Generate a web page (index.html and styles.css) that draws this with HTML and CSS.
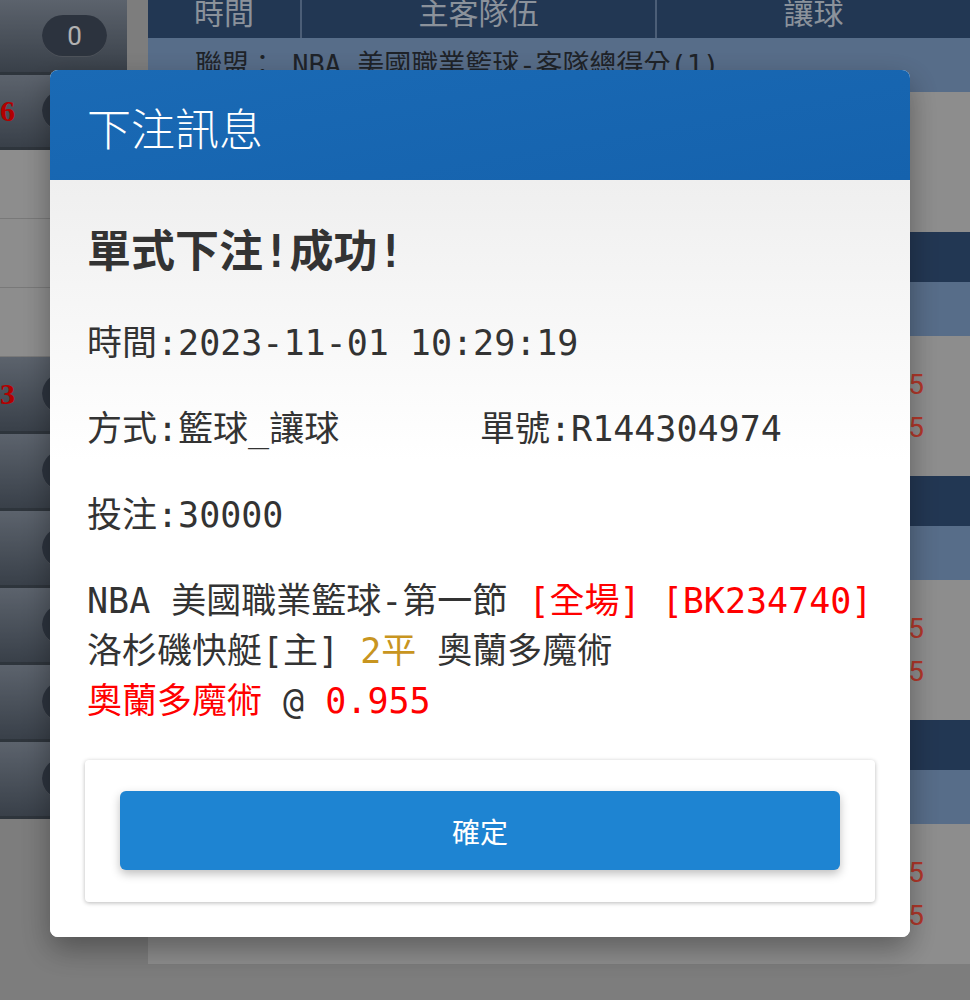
FILE: index.html
```html
<!DOCTYPE html>
<html lang="zh-Hant">
<head>
    <meta charset="UTF-8">
    <meta name="viewport" content="width=device-width, initial-scale=1.0">
    <title>下注訊息</title>
    <link rel="stylesheet" href="styles.css">
</head>
<body>
    <div class="page">
        <aside class="side">
            <div class="side-row"><span class="score"></span><span class="pill">0</span></div>
            <div class="side-row"><span class="score">6</span><span class="pill"></span></div>
            <div class="side-row plain"></div>
            <div class="side-row plain"></div>
            <div class="side-row plain"></div>
            <div class="side-row game"><span class="score">3</span><span class="pill"></span></div>
            <div class="side-row game"><span class="score"></span><span class="pill"></span></div>
            <div class="side-row game"><span class="score"></span><span class="pill"></span></div>
            <div class="side-row game"><span class="score"></span><span class="pill"></span></div>
            <div class="side-row game"><span class="score"></span><span class="pill"></span></div>
            <div class="side-row game"><span class="score"></span><span class="pill"></span></div>
        </aside>

        <main class="board">
            <section class="group first">
                <div class="cols"><div>時間</div><div>主客隊伍</div><div>讓球</div></div>
                <div class="league">聯盟： NBA 美國職業籃球-客隊總得分(1)</div>
                <div class="match"><div></div><div></div><div class="odds"></div></div>
            </section>
            <section class="group">
                <div class="cols"><div>時間</div><div>主客隊伍</div><div>讓球</div></div>
                <div class="league">聯盟： NBA 美國職業籃球-第一節</div>
                <div class="match"><div></div><div></div><div class="odds"><span>0.955</span><span>0.845</span></div></div>
            </section>
            <section class="group">
                <div class="cols"><div>時間</div><div>主客隊伍</div><div>讓球</div></div>
                <div class="league">聯盟： NBA 美國職業籃球-第二節</div>
                <div class="match"><div></div><div></div><div class="odds"><span>0.925</span><span>0.875</span></div></div>
            </section>
            <section class="group">
                <div class="cols"><div>時間</div><div>主客隊伍</div><div>讓球</div></div>
                <div class="league">聯盟： NBA 美國職業籃球-上半場</div>
                <div class="match"><div></div><div></div><div class="odds"><span>0.935</span><span>0.865</span></div></div>
            </section>
        </main>
    </div>

    <div class="mask"></div>

    <div class="dialog">
        <div class="dialog-head">下注訊息</div>
        <div class="dialog-body">
            <p class="result-title">單式下注!成功!</p>
            <p class="info">時間:2023-11-01 10:29:19</p>
            <div class="info info-row">
                <span>方式:籃球_讓球</span>
                <span>單號:R144304974</span>
            </div>
            <p class="info">投注:30000</p>
            <p class="bet-detail">
                NBA 美國職業籃球-第一節 <span class="red">[全場]</span> <span class="red">[BK234740]</span><br>
                洛杉磯快艇[主] <span class="gold">2平</span> 奧蘭多魔術<br>
                <span class="red">奧蘭多魔術</span> @ <span class="red">0.955</span>
            </p>
            <div class="actions">
                <button class="ok-btn">確定</button>
            </div>
        </div>
    </div>
</body>
</html>
```

FILE: styles.css
```css
* {
    box-sizing: border-box;
}

html, body {
    margin: 0;
    height: 100%;
}

body {
    background: #b3b3b3;
    font-family: "Noto Sans CJK TC", sans-serif;
    overflow: hidden;
}

.page {
    display: flex;
    align-items: flex-start;
    gap: 21px;
}

/* left list */
.side {
    width: 127px;
    flex: none;
    display: flex;
    flex-direction: column;
}

.side-row {
    display: flex;
    align-items: center;
    height: 75px;
    background: linear-gradient(#848e9c, #525c69);
    border-bottom: 3px solid #434c56;
}

.side-row.plain {
    height: 69px;
    background: #cbcbcb;
    border-bottom: 1px solid #aeaeae;
}

.side-row.game {
    height: 77px;
}

.score {
    width: 42px;
    font-family: "Liberation Serif", serif;
    font-weight: bold;
    font-size: 30px;
    color: #ff0000;
}

.pill {
    width: 65px;
    height: 42px;
    border-radius: 21px;
    background: #404a59;
    box-shadow: inset 0 -1px 0 rgba(255, 255, 255, 0.25);
    color: #fff;
    font-family: Roboto, sans-serif;
    font-size: 26px;
    line-height: 42px;
    text-align: center;
}

/* table */
.board {
    flex: 1;
}

.group.first {
    margin-top: -12px;
}

.cols, .match {
    display: grid;
    grid-template-columns: 152px 355px 1fr;
}

.cols {
    height: 50px;
    background: #324f77;
    color: #c8d2df;
    font-size: 30px;
    line-height: 46px;
    text-align: center;
}

.cols div + div {
    border-left: 2px solid #6d87ab;
}

.league {
    height: 54px;
    background: #7d9cc4;
    padding-left: 47px;
    color: #2c323a;
    font-family: "DejaVu Sans Mono", "Noto Sans CJK TC", monospace;
    font-size: 27px;
    line-height: 54px;
    white-space: nowrap;
    overflow: hidden;
}

.match {
    height: 140px;
    background: #cbcbcb;
}

.odds {
    display: flex;
    flex-direction: column;
    justify-content: center;
    align-items: flex-end;
    padding-right: 46px;
    color: #ff503d;
    font-family: Roboto, sans-serif;
    font-size: 28px;
    line-height: 43px;
}

/* dialog */
.mask {
    position: fixed;
    inset: 0;
    background: rgba(0, 0, 0, 0.3);
}

.dialog {
    position: fixed;
    left: 50px;
    top: 70px;
    width: 860px;
    border-radius: 8px;
    overflow: hidden;
    background: #fff;
    box-shadow: 0 12px 30px rgba(0, 0, 0, 0.35);
}

.dialog-head {
    height: 110px;
    display: flex;
    align-items: center;
    padding: 4px 37px 0;
    background: linear-gradient(170deg, #1a6ab5, #1562ad);
    color: #fff;
    font-size: 44px;
    font-weight: 300;
}

.dialog-body {
    padding: 42px 37px 35px;
    background: linear-gradient(#efefef, #fff 280px);
    color: #333;
    font-family: "DejaVu Sans Mono", "Noto Sans CJK TC", monospace;
    font-size: 35px;
}

.result-title {
    margin: 0 0 36px;
    font-size: 44px;
    font-weight: bold;
    line-height: 60px;
}

.info {
    margin: 0 0 36px;
    line-height: 50px;
}

.info-row {
    display: grid;
    grid-template-columns: 1fr 1fr;
}

.bet-detail {
    margin: 0 0 34px;
    line-height: 50px;
}

.red {
    color: #ff0000;
}

.gold {
    color: #c8951f;
}

.actions {
    margin: 0 -2px;
    background: #fff;
    border-radius: 4px;
    box-shadow: 0 1px 4px rgba(0, 0, 0, 0.28);
    padding: 31px 35px 32px;
}

.ok-btn {
    display: block;
    width: 100%;
    height: 79px;
    border: none;
    border-radius: 6px;
    background: #1e84d2;
    box-shadow: 0 4px 10px rgba(0, 0, 0, 0.25);
    color: #fff;
    font-family: "Noto Sans CJK TC", sans-serif;
    font-size: 28px;
    font-weight: 400;
}
```
